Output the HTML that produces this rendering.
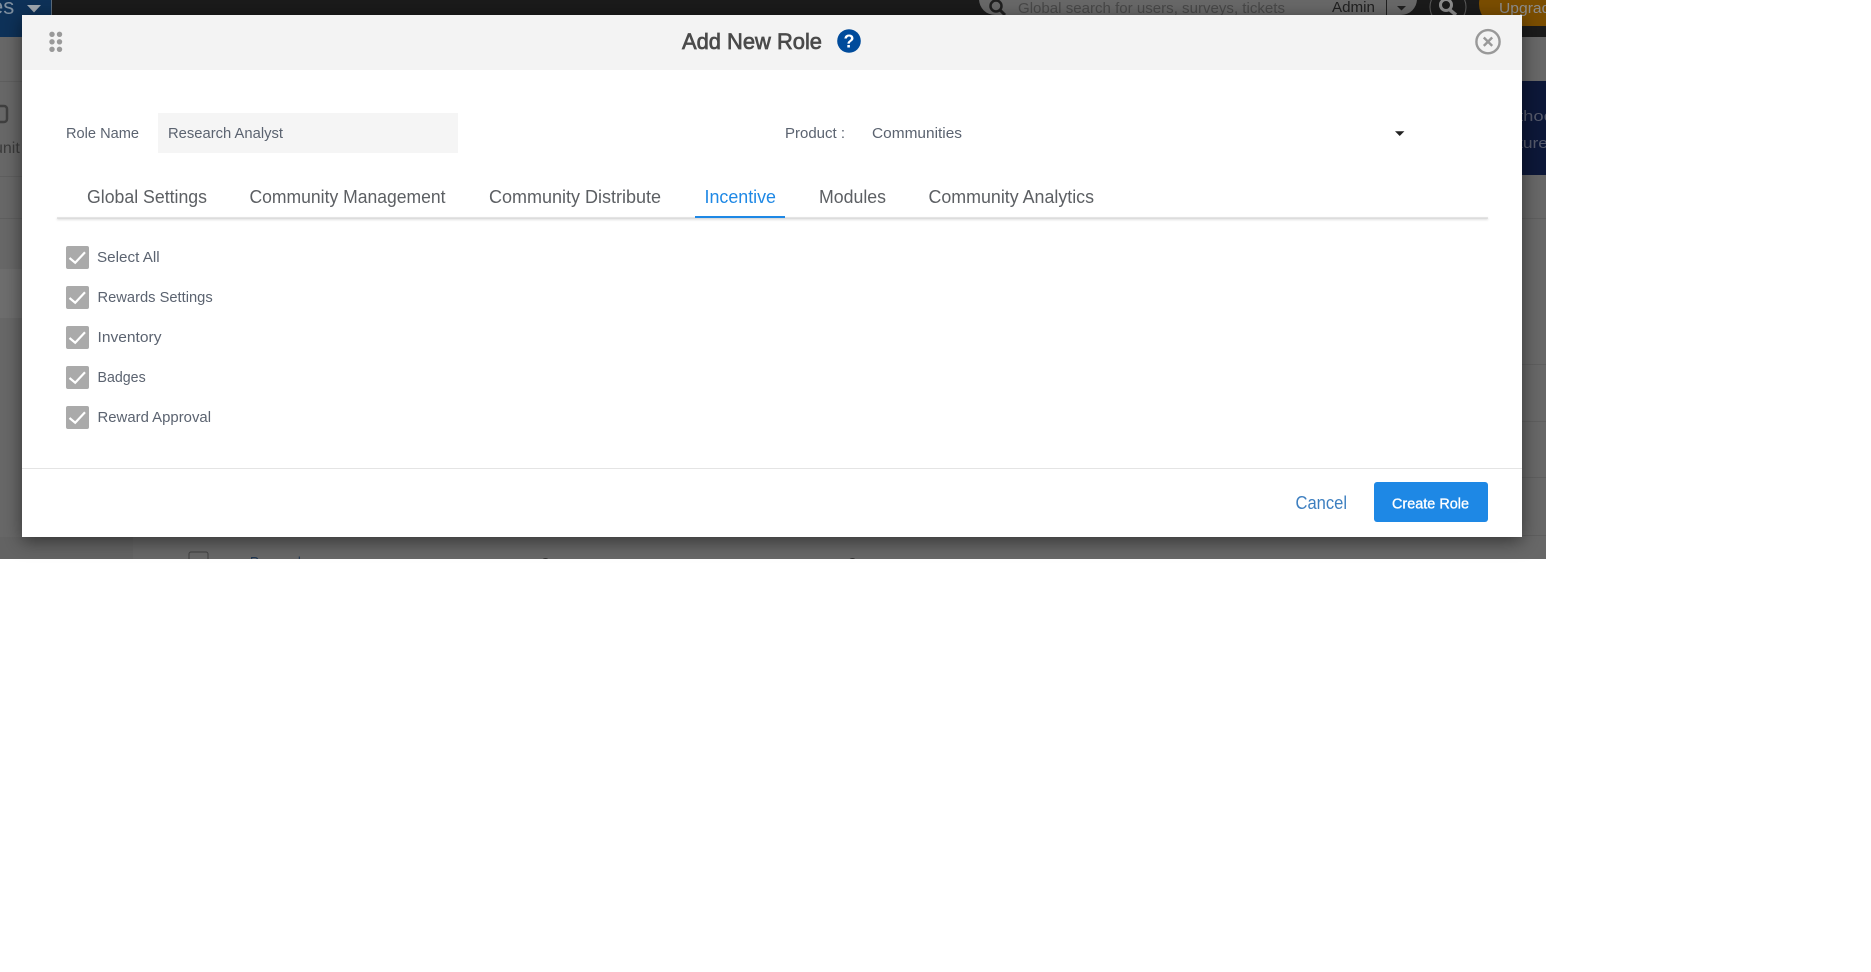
<!DOCTYPE html>
<html lang="en">
<head>
<meta charset="utf-8">
<title>Add New Role</title>
<style>
html,body{margin:0;padding:0;background:#fff;width:1871px;height:972px;overflow:hidden}
svg{display:block;position:absolute;left:0;top:0}
text{font-family:"Liberation Sans",sans-serif;white-space:pre}
.lbl{font-size:14.5px;fill:#5b6370}
.tab{font-size:18px;fill:#5c5f63}
</style>
</head>
<body>
<svg width="1871" height="972" viewBox="0 0 1871 972" xmlns="http://www.w3.org/2000/svg">
<defs>
<filter id="ms" x="-5%" y="-10%" width="110%" height="125%">
<feDropShadow dx="0" dy="4" stdDeviation="9" flood-color="#000" flood-opacity="0.5"/>
</filter>
<filter id="ls" x="-1%" y="-500%" width="102%" height="1100%">
<feDropShadow dx="0" dy="1" stdDeviation="1" flood-color="#000" flood-opacity="0.25"/>
</filter>
<clipPath id="bg"><rect x="0" y="0" width="1546" height="559"/></clipPath>
</defs>

<g clip-path="url(#bg)">
<rect x="0" y="0" width="1546" height="559" fill="#676767"/>
<rect x="0" y="0" width="1546" height="37" fill="#1a1a1a"/>
<rect x="0" y="0" width="51" height="37" fill="#0d3158"/>
<rect x="51" y="0" width="1" height="37" fill="#5a6a7a"/>
<text x="-9" y="14" font-size="22" fill="#8090a0">es</text>
<path d="M27 5h14l-7 7.500z" fill="#a0a8b0"/>

<rect x="979" y="-20" width="438" height="35" rx="16" fill="#686868"/>
<circle cx="996" cy="6" r="5.500" fill="none" stroke="#1f1f1f" stroke-width="2.500"/>
<path d="M1000 10l5 5" stroke="#1f1f1f" stroke-width="3"/>
<text x="1018" y="13" font-size="15" fill="#484848" textLength="267" lengthAdjust="spacingAndGlyphs">Global search for users, surveys, tickets</text>
<text x="1332" y="12" font-size="15" fill="#1f1f1f" textLength="43" lengthAdjust="spacingAndGlyphs">Admin</text>
<rect x="1386" y="0" width="1" height="15" fill="#1f1f1f"/>
<path d="M1397 6h9l-4.500 4.500z" fill="#1f1f1f"/>
<circle cx="1448" cy="7" r="18" fill="#1a1a1a" stroke="#5c5c5c" stroke-width="1"/>
<circle cx="1446" cy="5" r="5.500" fill="none" stroke="#8c8c8c" stroke-width="3"/>
<path d="M1450 10l6 5" stroke="#8c8c8c" stroke-width="3.500"/>
<rect x="1479" y="-18" width="100" height="44" rx="22" fill="#7a4d00"/>
<text x="1499" y="13" font-size="15" fill="#8d8d8d" textLength="60" lengthAdjust="spacingAndGlyphs">Upgrade</text>

<rect x="1500" y="81" width="46" height="94" fill="#0c1738"/>
<text x="1518" y="121" font-size="15" fill="#55596a" textLength="36" lengthAdjust="spacingAndGlyphs">thod</text>
<text x="1518" y="148" font-size="15" fill="#55596a" textLength="30" lengthAdjust="spacingAndGlyphs">ture</text>

<rect x="0" y="269" width="30" height="49" fill="#6d6d6d"/>
<rect x="0" y="81" width="30" height="1" fill="#5e5e5e"/>
<rect x="0" y="176" width="30" height="1" fill="#5e5e5e"/>
<rect x="0" y="218" width="30" height="1" fill="#5e5e5e"/>
<rect x="1500" y="218" width="46" height="1" fill="#5e5e5e"/>
<rect x="1500" y="364" width="46" height="1" fill="#5e5e5e"/>
<rect x="1500" y="421" width="46" height="1" fill="#5e5e5e"/>
<rect x="1500" y="477" width="46" height="1" fill="#5e5e5e"/>
<rect x="1500" y="535" width="46" height="1" fill="#5e5e5e"/>
<rect x="-10" y="106" width="17" height="16" rx="3" fill="none" stroke="#3f3f3f" stroke-width="2.500"/>
<text x="-6" y="153" font-size="16" fill="#3a3a3a">unit</text>

<rect x="0" y="537" width="133" height="22" fill="#636363"/>
<rect x="189" y="552" width="19" height="19" rx="2" fill="none" stroke="#3f3f3f" stroke-width="1"/>
<text x="250" y="568" font-size="16" fill="#1f3550" textLength="55" lengthAdjust="spacingAndGlyphs">Research</text>
<text x="541" y="569" font-size="16" fill="#2f2f2f">0</text>
<text x="848" y="569" font-size="16" fill="#2f2f2f">0</text>
</g>

<rect x="22" y="15" width="1500" height="522" fill="#fff" filter="url(#ms)"/>
<rect x="22" y="15" width="1500" height="55" fill="#f3f3f3"/>

<g fill="#999">
<circle cx="52" cy="34.300" r="2.700"/><circle cx="59.500" cy="34.300" r="2.700"/>
<circle cx="52" cy="41.800" r="2.700"/><circle cx="59.500" cy="41.800" r="2.700"/>
<circle cx="52" cy="49.300" r="2.700"/><circle cx="59.500" cy="49.300" r="2.700"/>
</g>

<text x="682" y="49" font-size="22" fill="#4a4a4a" stroke="#4a4a4a" stroke-width="0.700" textLength="140" lengthAdjust="spacingAndGlyphs">Add New Role</text>

<circle cx="849" cy="41" r="11.800" fill="#004b9b"/>
<text x="849" y="47.500" font-size="18" font-weight="700" fill="#fff" text-anchor="middle">?</text>

<circle cx="1488" cy="41.700" r="11.600" fill="none" stroke="#999" stroke-width="2.400"/>
<path d="M1483.800 37.500l8.400 8.400M1492.200 37.500l-8.400 8.400" stroke="#999" stroke-width="2.400" fill="none"/>

<text x="66" y="138" class="lbl" textLength="73" lengthAdjust="spacingAndGlyphs">Role Name</text>
<rect x="158" y="113" width="300" height="40" fill="#f5f5f5"/>
<text x="168" y="138" class="lbl" textLength="115" lengthAdjust="spacingAndGlyphs">Research Analyst</text>
<text x="785" y="138" class="lbl" textLength="60" lengthAdjust="spacingAndGlyphs">Product :</text>
<text x="872" y="138" class="lbl" textLength="90" lengthAdjust="spacingAndGlyphs">Communities</text>
<path d="M1395 131.300h9.400l-4.700 4.700z" fill="#222"/>

<rect x="57" y="217.500" width="1431" height="1" fill="#cfcfcf" filter="url(#ls)"/>
<text x="87" y="203" class="tab" textLength="120" lengthAdjust="spacingAndGlyphs">Global Settings</text>
<text x="249.500" y="203" class="tab" textLength="196" lengthAdjust="spacingAndGlyphs">Community Management</text>
<text x="489" y="203" class="tab" textLength="172" lengthAdjust="spacingAndGlyphs">Community Distribute</text>
<text x="704.500" y="203" class="tab" style="fill:#1e88e5" textLength="71.500" lengthAdjust="spacingAndGlyphs">Incentive</text>
<rect x="695" y="216" width="90" height="2" fill="#1e88e5"/>
<text x="819" y="203" class="tab" textLength="67" lengthAdjust="spacingAndGlyphs">Modules</text>
<text x="928.500" y="203" class="tab" textLength="165.500" lengthAdjust="spacingAndGlyphs">Community Analytics</text>

<g fill="#aaa">
<rect x="66" y="246" width="23" height="23" rx="2"/>
<rect x="66" y="286" width="23" height="23" rx="2"/>
<rect x="66" y="326" width="23" height="23" rx="2"/>
<rect x="66" y="366" width="23" height="23" rx="2"/>
<rect x="66" y="406" width="23" height="23" rx="2"/>
</g>
<g fill="none" stroke="#fff" stroke-width="2.200">
<path d="M69.500 258l5.700 4.700 9.800-10.400"/>
<path d="M69.500 298l5.700 4.700 9.800-10.400"/>
<path d="M69.500 338l5.700 4.700 9.800-10.400"/>
<path d="M69.500 378l5.700 4.700 9.800-10.400"/>
<path d="M69.500 418l5.700 4.700 9.800-10.400"/>
</g>
<text x="97" y="262" class="lbl" textLength="62.700" lengthAdjust="spacingAndGlyphs">Select All</text>
<text x="97.500" y="302" class="lbl" textLength="115.200" lengthAdjust="spacingAndGlyphs">Rewards Settings</text>
<text x="97.500" y="342" class="lbl" textLength="64" lengthAdjust="spacingAndGlyphs">Inventory</text>
<text x="97.500" y="382" class="lbl" textLength="48.200" lengthAdjust="spacingAndGlyphs">Badges</text>
<text x="97.500" y="422" class="lbl" textLength="113.500" lengthAdjust="spacingAndGlyphs">Reward Approval</text>

<rect x="22" y="468" width="1500" height="1" fill="#e4e4e4"/>
<text x="1295.500" y="509" font-size="18" fill="#3d7fc0" textLength="51.500" lengthAdjust="spacingAndGlyphs">Cancel</text>
<rect x="1374" y="482" width="114" height="40" rx="3" fill="#1e88e5"/>
<text x="1392" y="508.300" font-size="15" fill="#fff" stroke="#fff" stroke-width="0.350" textLength="77" lengthAdjust="spacingAndGlyphs">Create Role</text>
</svg>
</body>
</html>
